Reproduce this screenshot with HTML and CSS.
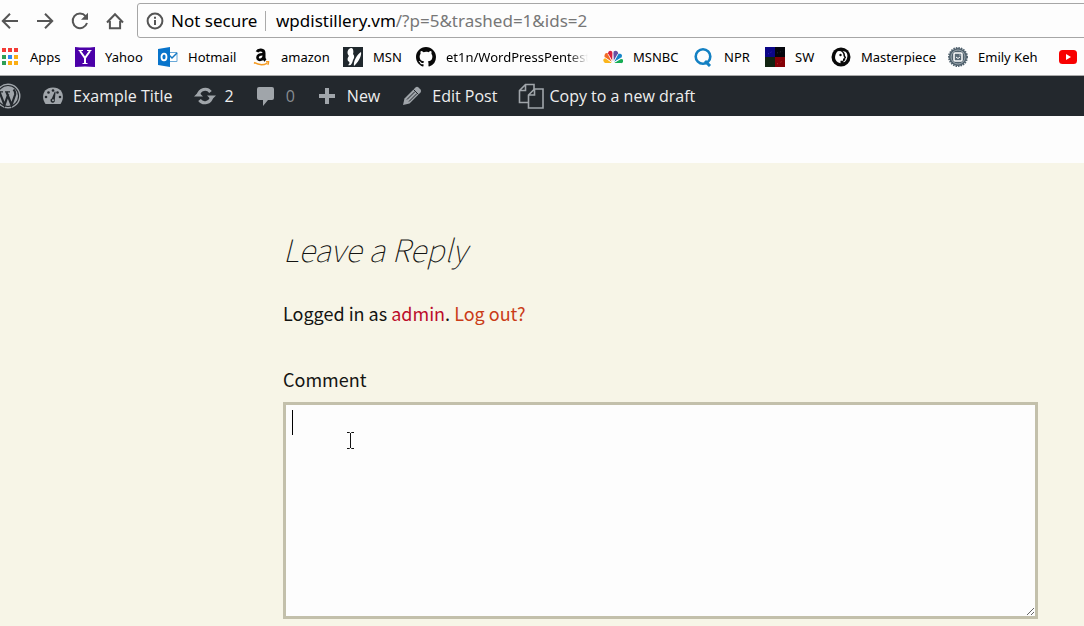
FILE: index.html
```html
<!DOCTYPE html>
<html lang="en">
<head>
<meta charset="utf-8">
<title>Example Title</title>
<link rel="stylesheet" href="styles.css">
</head>
<body>
<header class="browser">
  <div class="toolbar">
    <nav class="nav-buttons" aria-label="Browser">
      <button class="nav-button" type="button" aria-label="Back"><svg viewBox="0 0 20 20"><path d="M18 10H3M10 2.8 2.8 10l7.2 7.2"/></svg></button>
      <button class="nav-button" type="button" aria-label="Forward"><svg viewBox="0 0 20 20"><path d="M2 10h15M10 2.8l7.2 7.2-7.2 7.2"/></svg></button>
      <button class="nav-button" type="button" aria-label="Reload"><svg viewBox="0 0 20 20"><path d="M15.6 5.1A7.3 7.3 0 1 0 17 12"/><path class="solid" d="M18 1.800v7h-7z"/></svg></button>
      <button class="nav-button" type="button" aria-label="Home"><svg viewBox="0 0 20 20"><path d="M2 11.500 10 3.200l8 8.300M4.900 10v7.300h10.200V10"/></svg></button>
    </nav>
    <div class="address">
      <svg class="info-icon" viewBox="0 0 18 18"><circle cx="9" cy="9" r="7.400"/><path d="M9 8v5M9 4.800v2"/></svg>
      <span class="security">Not secure</span>
      <span class="url">wpdistillery.vm<span class="url-path">/?p=5&amp;trashed=1&amp;ids=2</span></span>
    </div>
  </div>
  <nav class="bookmarks" aria-label="Bookmarks">
    <a class="bookmark" href="#"><svg viewBox="0 0 20 20"><path fill="#f33b36" d="M2 1h4v4H2zM8 1h4v4H8zM14 1h4v4h-4z"/><path fill="#2e9f55" d="M2 8h4v4H2zM2 14h4v4H2z"/><path fill="#2d87f0" d="M8 8h4v4H8z"/><path fill="#fbae14" d="M14 8h4v4h-4zM8 14h4v4H8zM14 14h4v4h-4z"/></svg><span>Apps</span></a>
    <a class="bookmark" href="#"><svg viewBox="0 0 20 20"><path fill="#4b00a8" d="M0 0q10 1 20 0v20q-10-1-20 0z"/><path fill="none" stroke="#fff" stroke-width="2" d="M5 4l5 7 5-7M10 11v6"/><path stroke="#fff" d="M3.500 3.500H8M12 3.500h4.500M7.500 16.500h5"/></svg><span>Yahoo</span></a>
    <a class="bookmark" href="#"><svg viewBox="0 0 20 20"><path fill="#fff" stroke="#6aa9d8" d="M10 5.500h9v9h-9z"/><path fill="none" stroke="#1679c5" stroke-width="1.500" d="M11 8l3 3 5-5"/><path fill="#0874cb" d="M0 2l12-2v20L0 18z"/><ellipse cx="6" cy="10" rx="2.500" ry="3.300" fill="none" stroke="#fff" stroke-width="1.800"/></svg><span>Hotmail</span></a>
    <a class="bookmark" href="#"><svg viewBox="0 0 20 20"><path fill="none" stroke="#050505" stroke-width="3" d="M6 4.800Q7 2.800 10 3q3 .2 3 3v4.500q0 1.700 1.500 3"/><path fill="none" stroke="#050505" stroke-width="2.700" d="M12.500 7.300C8 7 6.500 8.500 6.500 10.500c0 3.500 6 2.800 6-1"/><path fill="none" stroke="#f59b22" stroke-width="1.500" d="M3 15.500q7 4 13 .8M15 14.800h2.500q0 2-.8 3"/></svg><span>amazon</span></a>
    <a class="bookmark" href="#"><svg viewBox="0 0 20 20"><path fill="#20282d" d="M0 0h20v20H0z"/><path fill="#fff" d="M6 2c4-3 5 2 4 5 2 2 1 5 0 6-1 4-2 6-5 5 2-2 2-3 0-4-1-2 0-4 1-5C4 7 4 4 6 2zM18 5c1 4-3 11-7 14-1-4 3-12 7-14z"/></svg><span>MSN</span></a>
    <a class="bookmark bookmark-long" href="#"><svg viewBox="0 0 16 16"><path fill="#080808" d="M8 0C3.580 0 0 3.580 0 8c0 3.540 2.290 6.530 5.470 7.590.4.070.55-.17.55-.38 0-.19-.01-.82-.01-1.490-2.010.37-2.530-.49-2.690-.94-.09-.23-.48-.94-.82-1.130-.28-.15-.68-.52-.01-.53.63-.01 1.080.58 1.230.82.72 1.210 1.870.87 2.330.66.07-.52.28-.87.51-1.070-1.780-.2-3.640-.89-3.640-3.950 0-.87.31-1.590.82-2.150-.08-.2-.36-1.020.08-2.120 0 0 .67-.21 2.200.82A7.600 7.600 0 0 1 8 3.860c.68 0 1.360.09 2 .27 1.530-1.040 2.200-.82 2.200-.82.44 1.100.16 1.920.08 2.120.51.56.82 1.270.82 2.150 0 3.070-1.870 3.750-3.650 3.950.29.25.54.73.54 1.480 0 1.070-.01 1.930-.01 2.200 0 .21.15.46.55.38A8 8 0 0 0 16 8c0-4.420-3.580-8-8-8z"/></svg><span>et1n/WordPressPentest</span></a>
    <a class="bookmark" href="#"><svg viewBox="0 0 20 20"><path fill="#fbb51c" d="M9 16H2c-4-3 0-6 2-4z"/><path fill="#f36b25" d="M9 15 1.500 10C1 6 4 5 5.500 7z"/><path fill="#d8213d" d="M9.300 14 5 7c0-4 4-4 4.700-1z"/><path fill="#694fa2" d="M10.700 14 10 6c1-4 6-2 5 1z"/><path fill="#1686c9" d="M11 15l4-8c4-1 5 2 3 4z"/><path fill="#16ad54" d="M11 16l7-4c4 0 2 5 0 4z"/><path fill="none" stroke="#fdfdfd" stroke-width=".8" d="M9 15.500 2.500 11M9.500 15 5 7M10 14V5M10.500 15 15 7M11 15.500l7-4.500"/></svg><span>MSNBC</span></a>
    <a class="bookmark" href="#"><svg viewBox="0 0 20 20"><circle cx="9" cy="9.500" r="7.300" fill="none" stroke="#1380c3" stroke-width="2.600"/><path d="M11 14l5 5" stroke="#1380c3" stroke-width="3"/></svg><span>NPR</span></a>
    <a class="bookmark" href="#"><svg viewBox="0 0 20 20"><path d="M0 0h20v20H0z" fill="#05060d"/><path fill="#0c0687" d="M0 0h10v10H0z"/><path fill="#112411" d="M0 10h10v10H0z"/><path fill="#850006" d="M10 10h10v10H10z"/><path fill="none" stroke="#3827bd" stroke-dasharray="1 2" d="M3 7l5-3"/><path stroke="#29303a" stroke-dasharray="1 2" d="M12 6l6-2"/><path stroke="#bb3030" stroke-dasharray="1 3" d="M12 17l6-3"/></svg><span>SW</span></a>
    <a class="bookmark" href="#"><svg viewBox="0 0 20 20"><circle cx="10" cy="10" r="9.500" fill="#090909"/><path fill="#fff" d="M8 4c3 0 4.500 2 4.500 5l1 2-1.500.800v2H9.500v2.400c-4-.7-6-4-5.300-7.200C4.800 6 6 4 8 4z"/><path fill="#fff" d="M11.500 4.200c4-.6 5.500 2.800 4.700 6.300-.5 2.800-2.200 5-3.700 4.700v-1l1.700-1v-1.800l1-.7-1.200-2.200c.2-2-.8-3.300-2.500-4.300z"/><circle cx="9.500" cy="8" r="1.200" fill="#090909"/></svg><span>Masterpiece</span></a>
    <a class="bookmark" href="#"><svg viewBox="0 0 20 20"><circle cx="10" cy="10" r="9" fill="#50616d" stroke="#50616d" stroke-width="2" stroke-dasharray="1.500 1"/><circle cx="10" cy="10" r="7" fill="none" stroke="#9faab1"/><rect x="6" y="6" width="8" height="8" rx="1" fill="#596975" stroke="#fff" stroke-width="1.500"/><path fill="none" stroke="#fff" d="M8 10q2 3 4 0M11.500 8h1"/></svg><span>Emily Keh</span></a>
    <a class="bookmark" href="#" aria-label="YouTube"><svg viewBox="0 0 20 20"><rect x="1" y="3" width="18" height="14" rx="3.500" fill="#f80000"/><path fill="#fff" d="M8 7l5 3-5 3z"/></svg></a>
  </nav>
</header>

<nav class="admin-bar" aria-label="Site tools">
  <a class="admin-item admin-logo" href="#" aria-label="WordPress"><svg viewBox="0 0 26 26"><circle cx="13" cy="13" r="11.800" fill="none" stroke="#a0a5aa" stroke-width="1.400"/><circle cx="13" cy="13" r="10" fill="#a0a5aa"/><path fill="none" stroke="#23282d" stroke-width="2.200" d="M4.500 9l5 13L13.300 11M11.500 9l5 13L20 12q.8-3-1.500-5.500"/><path stroke="#23282d" stroke-width="1.300" d="M2.500 8.800h5.500M10 8.800h5"/></svg></a>
  <a class="admin-item" href="#"><svg viewBox="0 0 22 22"><path fill="#a0a5aa" d="M3.500 19C-1 13 .5 2.500 11 2.500S23 13 18.500 19z"/><g fill="#23282d"><circle cx="11" cy="5.500" r="1.300"/><circle cx="6.500" cy="7.500" r="1.300"/><circle cx="15.500" cy="7.500" r="1.300"/><circle cx="4" cy="12" r="1.300"/><circle cx="18" cy="12" r="1.300"/><path d="M12.800 6.500l.8.300-.8 8.200a2.200 2.200 0 1 1-3-1.500z"/></g><circle cx="11" cy="15.300" r="1" fill="#a0a5aa"/></svg><span>Example Title</span></a>
  <a class="admin-item" href="#"><svg viewBox="0 0 22 22"><g fill="none" stroke="#a0a5aa" stroke-width="3.200"><path d="M4.500 10A6.700 6.700 0 0 1 16.500 7M17.500 12A6.700 6.700 0 0 1 5.500 15"/></g><path fill="#a0a5aa" d="M0 11.500h9L4.500 7zM13 10.500h9L17.500 15z"/></svg><span>2</span></a>
  <a class="admin-item admin-muted" href="#"><svg viewBox="0 0 22 22"><path fill="#a0a5aa" d="M4 2h13q2 0 2 2v9q0 2-2 2h-4l-5 6v-6H4q-2 0-2-2V4q0-2 2-2z"/></svg><span>0</span></a>
  <a class="admin-item" href="#"><svg viewBox="0 0 22 22"><path fill="#a0a5aa" d="M9 3h4v6h6v4h-6v6H9v-6H3V9h6z"/></svg><span>New</span></a>
  <a class="admin-item" href="#"><svg viewBox="0 0 22 22"><path fill="#a0a5aa" d="M14.500 2.500q1.500-1.300 3 0l2 2q1.300 1.500 0 3L8.500 18.500 2 20l1.500-6.500z"/><path stroke="#23282d" d="M12.500 4.500l5 5M6 14.500l8-8M8 16.500l8-8" fill="none"/></svg><span>Edit Post</span></a>
  <a class="admin-item admin-copy" href="#"><svg viewBox="0 0 26 26"><g fill="#23282d" stroke="#a0a5aa" stroke-width="1.600"><path d="M1.500 7.500l6-6H16v18H1.500zM7.500 1.500v6h-6"/><path d="M10.500 12l6-6H25v19H10.500zM16.500 6v6h-6"/></g></svg><span>Copy to a new draft</span></a>
</nav>

<main class="page">
  <section class="respond">
    <h1 class="reply-title">Leave a Reply</h1>
    <p class="logged-in">Logged in as <a class="user" href="#">admin</a>. <a class="logout" href="#">Log out?</a></p>
    <label class="comment-label" for="comment">Comment</label>
    <div class="comment-field">
      <textarea class="comment" id="comment"></textarea>
      <span class="caret"></span>
      <svg class="pointer" viewBox="0 0 9 17"><path d="M1 .5h2.500l1 1 1-1H8M4.500 1v15M1 16.500h2.500l1-1 1 1H8"/></svg>
    </div>
  </section>
</main>
</body>
</html>
```
FILE: styles.css
```css
* { box-sizing: border-box; }
html, body { height: 100%; }
body {
  margin: 0;
  display: flex;
  flex-direction: column;
  overflow: hidden;
  background: #fdfdfd;
  color: #141412;
  font-family: "Noto Sans CJK SC", sans-serif;
}
a { color: inherit; text-decoration: none; }
svg { display: block; flex: none; }

.browser {
  flex: none;
  border-bottom: 1px solid #aaa;
  color: #000;
  font-family: "Noto Sans", sans-serif;
  overflow: hidden;
}
.toolbar { display: flex; padding-top: 3px; }
.nav-buttons { display: flex; align-items: center; gap: 15px; padding-right: 12px; }
.nav-button { padding: 0; border: 0; background: none; }
.nav-button svg { width: 20px; height: 20px; fill: none; stroke: #555; stroke-width: 2; }
.nav-button .solid { fill: #555; stroke: none; }
.address {
  flex: 1;
  display: flex;
  align-items: center;
  height: 35px;
  margin-right: -4px;
  padding-left: 8px;
  border: 1px solid #a6a6a6;
  border-radius: 3px;
  font-size: 17px;
  line-height: 20px;
  white-space: nowrap;
}
.info-icon { width: 18px; height: 18px; margin-right: 7px; fill: none; stroke: #555; stroke-width: 2; }
.security { width: 95px; border-right: 1px solid #aaa; }
.url { padding-left: 10px; }
.url-path { color: #777; }

.bookmarks {
  display: grid;
  grid-template-columns: 75px 83px 93px 92px 73px 187px 91px 71px 66px 117px 110px 20px;
  height: 37px;
  align-items: center;
  font-size: 13px;
  line-height: 20px;
  white-space: nowrap;
}
.bookmark { display: flex; align-items: center; gap: 10px; }
.bookmark svg { width: 20px; height: 20px; }
.bookmark-long { margin-right: 15px; mask-image: linear-gradient(to left, transparent, #000 20px); }

.admin-bar {
  flex: none;
  display: flex;
  align-items: center;
  gap: 21px;
  height: 40px;
  background: #23282d;
  color: #eee;
  font-family: "Open Sans", sans-serif;
  font-size: 16px;
  line-height: 40px;
  white-space: nowrap;
}
.admin-item { display: flex; align-items: center; gap: 9px; }
.admin-item svg { width: 22px; height: 22px; }
.admin-logo { margin-left: -5px; }
.admin-logo svg, .admin-copy svg { width: 26px; height: 26px; }
.admin-copy { gap: 5px; }
.admin-muted { color: #888d91; }

.page { flex: 1; display: flex; margin-top: 47px; background: #f7f5e7; }
.respond { flex: 1; padding: 61px 46px 0 283px; }
.reply-title { margin: 0; font-size: 31px; font-style: italic; font-weight: 100; line-height: 50px; }
.logged-in { margin: 24px 0 0; font-size: 18px; line-height: 30px; }
.user { color: #bc0d2b; }
.logout { color: #ca3c18; }
.comment-label { display: block; margin-top: 36px; font-size: 18px; line-height: 30px; }
.comment-field { position: relative; margin-top: 8px; }
.comment {
  display: block;
  width: 100%;
  height: 217px;
  padding: 5px;
  border: 3px solid #c3c0ab;
  background: #fdfdfd;
  font: inherit;
  outline: 0;
}
.caret { position: absolute; top: 8px; left: 9px; width: 1px; height: 25px; background: #000; }
.pointer { position: absolute; top: 30px; left: 63px; width: 9px; height: 17px; fill: none; stroke: #111; }
```
